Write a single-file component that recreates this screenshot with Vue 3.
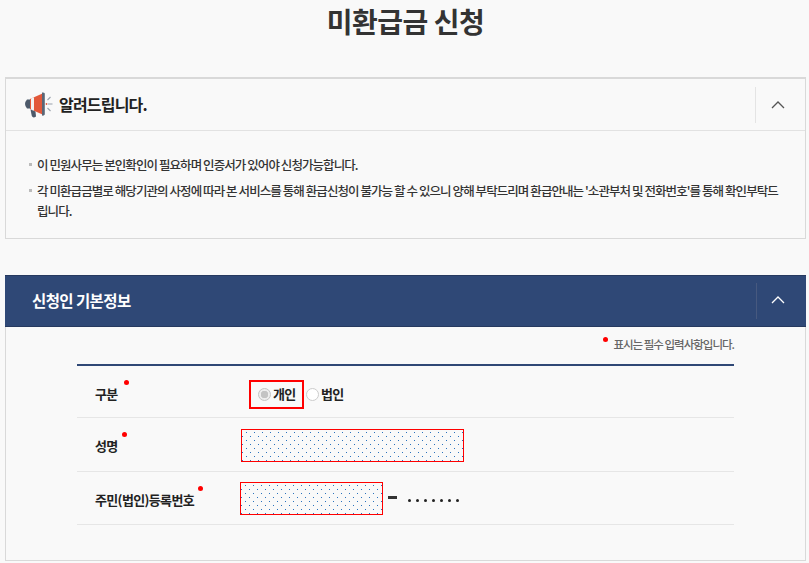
<script setup>
const notices = [
  '이 민원사무는 본인확인이 필요하며 인증서가 있어야 신청가능합니다.',
  "각 미환급금별로 해당기관의 사정에 따라 본 서비스를 통해 환급신청이 불가능 할 수 있으니 양해 부탁드리며 환급안내는 '소관부처 및 전화번호'를 통해 확인부탁드립니다.",
]
</script>

<template>
  <div class="page">
    <h1 class="title">미환급금 신청</h1>

    <section class="notice">
      <header class="notice-head">
        <svg class="horn" width="30" height="26" viewBox="0 0 30 26">
          <path d="M4 7.5 H7 V16.5 H4 Q0 12 4 7.5Z" fill="#4d5a6b"/>
          <path d="M7 7 L19.5 1.5 V22.5 L7 17Z" fill="#e2583a"/>
          <path d="M8 6.6 L11 5.3 V18.7 L8 17.4Z" fill="#f2f2f2"/>
          <path d="M19 0.5 Q21 0 21.8 1.5 V22.5 Q21 24 19 23.5Z" fill="#5a6676"/>
          <path d="M7.5 17.5 L12.5 19.5 L13 24.5 Q10 26.5 8.8 24Z" fill="#4d5a6b"/>
          <path d="M24.5 8 L27.5 5 M25 12 H29.5 M24.5 16 L27.5 19" stroke="#9aa2ad" stroke-width="1.1" fill="none"/>
          <circle cx="23.5" cy="12" r="0.9" fill="#e2583a"/>
        </svg>
        <h2 class="notice-title">알려드립니다.</h2>
        <div class="toggle">
          <svg width="14" height="8" viewBox="0 0 14 8"><path d="M1 7 L7 1 L13 7" fill="none" stroke="#555" stroke-width="1.3"/></svg>
        </div>
      </header>
      <ul class="notice-list">
        <li v-for="n in notices" :key="n">{{ n }}</li>
      </ul>
    </section>

    <section class="form-card">
      <header class="form-head">
        <h2 class="form-title">신청인 기본정보</h2>
        <div class="toggle dark">
          <svg width="14" height="8" viewBox="0 0 14 8"><path d="M1 7 L7 1 L13 7" fill="none" stroke="#fff" stroke-width="1.3"/></svg>
        </div>
      </header>
      <div class="form-body">
        <p class="required-note"><i class="dot"></i>표시는 필수 입력사항입니다.</p>
        <div class="rows">
          <div class="row row-type">
            <div class="label">구분<i class="dot"></i></div>
            <div class="field">
              <span class="highlight">
                <span class="radio on"></span>
                <b>개인</b>
              </span>
              <span class="radio"></span>
              <b>법인</b>
            </div>
          </div>
          <div class="row row-name">
            <div class="label">성명<i class="dot"></i></div>
            <div class="field"><div class="input wide"></div></div>
          </div>
          <div class="row row-id">
            <div class="label">주민(법인)등록번호<i class="dot"></i></div>
            <div class="field id-field">
              <div class="input narrow"></div>
              <span class="dash"></span>
              <span class="pw"><i v-for="k in 7" :key="k"></i></span>
            </div>
          </div>
        </div>
      </div>
    </section>
  </div>
</template>

<style scoped>
.page {
  width: 809px;
  height: 563px;
  overflow: hidden;
  background: #f9f9f9;
  box-sizing: border-box;
  padding: 0 3px 0 5px;
  font-family: "Noto Sans CJK KR", "Noto Sans", sans-serif;
  color: #222;
}
.title {
  margin: 0;
  height: 77px;
  box-sizing: border-box;
  text-align: center;
  font-size: 28px;
  line-height: 42px;
  font-weight: 700;
  letter-spacing: -0.5px;
  color: #333;
}
.notice {
  border: 1px solid #d9d9d9;
  border-top-width: 2px;
  height: 162px;
  box-sizing: border-box;
}
.notice-head {
  height: 51px;
  border-bottom: 1px solid #e2e2e2;
  display: flex;
  align-items: center;
  padding-left: 17px;
}
.horn { flex: none; margin-right: 6px; }
.notice-title {
  margin: -1px 0 0;
  flex: 1;
  font-size: 16px;
  font-weight: 700;
  letter-spacing: -0.8px;
  color: #222;
}
.toggle {
  flex: none;
  width: 50px;
  height: 36px;
  padding-right: 5px;
  box-sizing: border-box;
  border-left: 1px solid #e4e4e4;
  display: flex;
  align-items: center;
  justify-content: center;
}
.notice-list {
  list-style: none;
  margin: 0;
  padding: 24px 20px 0 31px;
  font-size: 12.5px;
  font-weight: 500;
  line-height: 20px;
  letter-spacing: -0.93px;
  color: #333;
}
.notice-list li { position: relative; margin-bottom: 6px; }
.notice-list li::before {
  content: "";
  position: absolute;
  left: -8px;
  top: 8px;
  width: 3px;
  height: 3px;
  background: #bbb;
}
.form-card {
  margin-top: 36px;
  height: 286px;
  border: 1px solid #d9d9d9;
  border-top: 0;
  box-sizing: border-box;
}
.form-head {
  height: 52px;
  margin: 0 -1px;
  background: #2f4876;
  display: flex;
  align-items: center;
  padding-left: 27px;
  border-top: 1px solid #26395f;
  border-bottom: 1px solid #26395f;
  box-sizing: border-box;
}
.form-title {
  margin: -2px 0 0;
  flex: 1;
  font-size: 15.5px;
  font-weight: 700;
  letter-spacing: -0.6px;
  color: #fff;
}
.toggle.dark { border-left-color: #47597f; padding-right: 7px; }
.toggle.dark svg { margin-top: -2px; }
.form-body { padding: 0 71px; }
.required-note {
  margin: 0;
  height: 37px;
  padding-bottom: 3px;
  box-sizing: border-box;
  display: flex;
  justify-content: flex-end;
  align-items: center;
  font-size: 11.5px;
  font-weight: 500;
  letter-spacing: -1px;
  color: #666;
}
.required-note .dot { position: static; margin: -9px 5px 0 0; }
.dot {
  display: inline-block;
  width: 5px;
  height: 5px;
  border-radius: 50%;
  background: #f00;
}
.rows { border-top: 2px solid #2f4876; }
.row {
  display: flex;
  align-items: center;
  box-sizing: border-box;
  border-bottom: 1px solid #e6e6e6;
}
.row-type { height: 52px; }
.row-name { height: 54px; }
.row-id { height: 53px; }
.label {
  width: 164px;
  flex: none;
  box-sizing: border-box;
  padding-left: 18px;
  padding-top: 2px;
  font-size: 13px;
  font-weight: 700;
  letter-spacing: -0.65px;
  color: #222;
}
.row-type .label { padding-top: 3px; }
.row-id .label { padding-top: 3px; }
.label .dot { position: relative; top: -14px; left: 4px; }
.row-type .label .dot { left: 6px; }
.field { display: flex; align-items: center; font-size: 13px; letter-spacing: -0.5px; color: #222; }
.field b { font-weight: 700; letter-spacing: -0.7px; margin-top: -2px; }
.row-type .field { margin-top: 5px; }
.row-name .field { margin-top: 2px; }
.highlight {
  width: 55px;
  height: 29px;
  box-sizing: border-box;
  border: 2px solid #f00;
  margin-left: 8px;
  margin-right: 2px;
  padding-left: 7px;
  display: flex;
  align-items: center;
}
.radio {
  flex: none;
  width: 11px;
  height: 11px;
  border: 1px solid #ccc;
  border-radius: 50%;
  margin-right: 2px;
  background: #fff;
}
.radio.on {
  background: radial-gradient(circle, #c4c4c4 0 3.5px, #eee 4px);
  border-color: #c4c4c4;
}
.input {
  height: 33px;
  box-sizing: border-box;
  border: 1px solid #f00;
  background-color: #f9f9f9;
  background-image:
    radial-gradient(circle at 0.5px 0.5px, #2a72bd 0.8px, transparent 0.8px),
    radial-gradient(circle at 0.5px 0.5px, #2a72bd 0.8px, transparent 0.8px);
  background-size: 8px 8px;
  background-position: 4px 2px, 0 6px;
}
.wide { width: 223px; }
.narrow { width: 143px; }
.id-field { margin-left: -1px; margin-top: 1px; }
.dash { width: 9px; height: 3px; background: #333; margin: 0 11px 3px 5px; }
.pw { display: flex; gap: 5px; margin-top: 3px; }
.pw i { width: 3px; height: 3px; border-radius: 50%; background: #222; }
</style>

<style>
html, body { margin: 0; background: #f9f9f9; }
</style>
